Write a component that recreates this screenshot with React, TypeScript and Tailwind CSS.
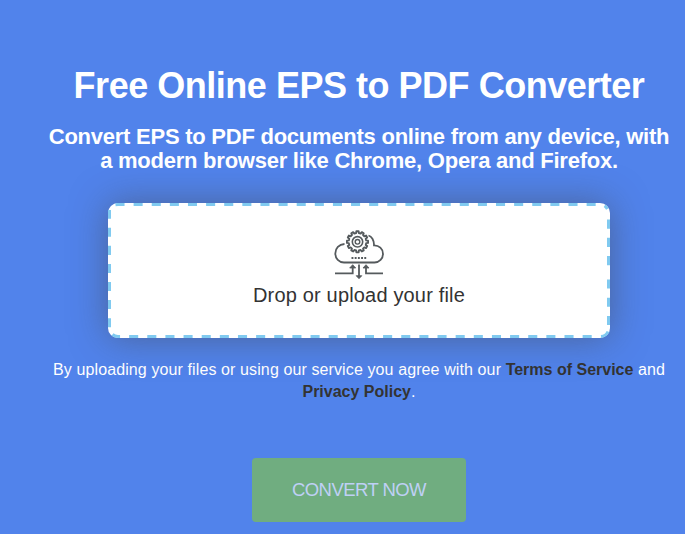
const GEAR_TEETH = 12;

// Closed outline of the cog, alternating between tooth tips and roots.
const gearOutline =
  Array.from({ length: GEAR_TEETH }, (_, i) => {
    const step = (2 * Math.PI) / GEAR_TEETH;
    const corners: [number, number][] = [
      [-0.3, 8.8],
      [-0.2, 10.6],
      [0.2, 10.6],
      [0.3, 8.8],
    ];
    return corners
      .map(([offset, radius], j) => {
        const angle = (i + offset) * step;
        const x = 23.5 + radius * Math.cos(angle);
        const y = 11.8 + radius * Math.sin(angle);
        return `${i === 0 && j === 0 ? "M" : "L"}${x.toFixed(2)} ${y.toFixed(2)}`;
      })
      .join("");
  }).join("") + "Z";

function CloudGearIcon() {
  return (
    <svg className="block h-[50px] w-[50px]" viewBox="0 0 50 50" fill="none" stroke="#555a5d" strokeWidth="1.8">
      <path d="M10.5 14C5 14.3 1.3 18.5 1.3 23.4C1.3 28.6 5 32.5 10 32.5H40.5C45.4 32.5 49 28.5 49 23.9C49 18.8 45 15.3 40 15.4C40.2 10.2 37.5 6.3 34.5 5.5" />
      <path d={gearOutline} strokeWidth="1.9" strokeLinejoin="round" />
      <circle cx="23.5" cy="11.8" r="5.2" strokeWidth="1.6" />
      <circle cx="23.5" cy="11.8" r="2.3" strokeWidth="1.4" />
      <path d="M17.5 28H33" strokeWidth="1.8" strokeDasharray="1.9 1.3" />
      <path d="M1 43.3H18.7V37M49 43.3H32V37M25 34.5V46" />
      <path d="M15.7 38L18.7 34.7L21.7 38ZM29 38L32 34.7L35 38ZM22.2 45.7L25 48.7L27.8 45.7Z" fill="#555a5d" strokeWidth="0.8" />
    </svg>
  );
}

function DashedOutline() {
  return (
    <svg className="pointer-events-none absolute inset-0 h-full w-full" viewBox="0 0 502 135" fill="none" stroke="#80caf0" strokeWidth="3">
      <path d="M7.5 1.8L10 1.5H492Q497 1.5 499.4 6" strokeDasharray="9.06 9.06" />
      <path d="M500.5 16.5V62.5" strokeDasharray="9.2 9.1" />
      <path d="M500.5 76.5V122" strokeDasharray="9.1 9.1" />
      <path d="M500 128.5Q498 133 493 133.5" />
      <path d="M483.7 133.5H10Q7 133.5 4.5 131.5" strokeDasharray="9.07 9.07" />
      <path d="M1.5 124.2V7" strokeDasharray="9.04 9.04" />
    </svg>
  );
}

export default function App() {
  return (
    <main className="flex h-[534px] w-[685px] flex-col items-center overflow-hidden bg-[#5183eb] pt-[64px] pl-[33px] text-center font-['Liberation_Sans',sans-serif] whitespace-nowrap text-white">
      <h1 className="h-[61px] text-[36px] leading-[44px] font-bold tracking-[-0.48px]">Free Online EPS to PDF Converter</h1>
      <h2 className="text-[22px] leading-[24px] font-bold tracking-[-0.245px]">
        <span className="block">Convert EPS to PDF documents online from any device, with</span>
        <span className="block">a modern browser like Chrome, Opera and Firefox.</span>
      </h2>
      <section className="relative mt-[29.5px] flex h-[135px] w-[502px] shrink-0 flex-col items-center rounded-[10px] bg-white pt-[27px] text-[#333] shadow-[0_0_36px_rgba(68,68,68,0.5)]">
        <DashedOutline />
        <CloudGearIcon />
        <p className="mt-[2px] text-[20px] leading-[26px] tracking-[0.17px]">Drop or upload your file</p>
      </section>
      <p className="mt-[21px] text-[16px] leading-[22px] tracking-[0.11px]">
        <span className="block">By uploading your files or using our service you agree with our <b className="tracking-normal text-[#333]">Terms of Service</b> and</span>
        <span className="block"><b className="tracking-normal text-[#333]">Privacy Policy</b>.</span>
      </p>
      <button className="mt-[55px] h-[64px] w-[214px] shrink-0 rounded-[4px] bg-[#70ad80] text-[18.5px] tracking-[-0.55px] text-[#bfd0f5]">CONVERT NOW</button>
    </main>
  );
}
